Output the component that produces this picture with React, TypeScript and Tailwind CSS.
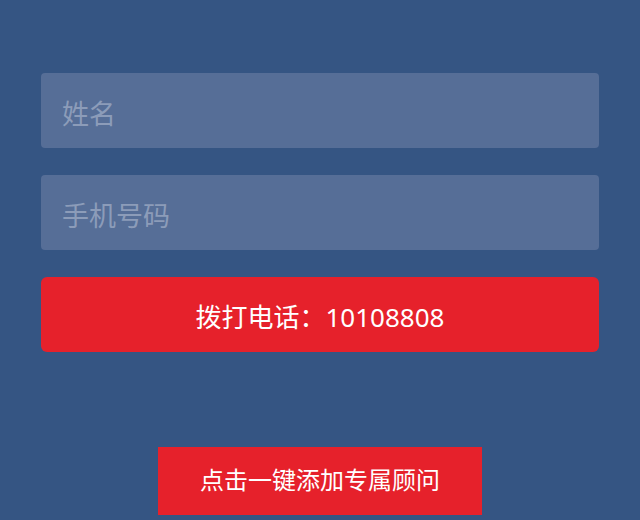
const App = () => {
  return (
    <div className="w-[640px] h-[520px] bg-[#355583] overflow-hidden font-['Noto_Sans','Noto_Sans_CJK_SC',sans-serif]">
      <div className="flex flex-col gap-[27px] px-[41px] pt-[73px]">
        <input
          placeholder="姓名"
          className="h-[75px] w-full rounded-[4px] bg-[#566e97] px-[21px] pt-[5px] text-[27px] text-white placeholder:text-[#8c9cb9] outline-none"
        />
        <input
          placeholder="手机号码"
          className="h-[75px] w-full rounded-[4px] bg-[#566e97] px-[21px] pt-[5px] text-[27px] text-white placeholder:text-[#8c9cb9] outline-none"
        />
        <button className="h-[75px] w-full rounded-[6px] bg-[#e6212b] pt-[5px] text-[26px] text-white">
          拨打电话：10108808
        </button>
      </div>
      <div className="flex justify-center pt-[95px]">
        <button className="h-[68px] w-[324px] bg-[#e6212b] pb-[3px] text-[24px] text-white">
          点击一键添加专属顾问
        </button>
      </div>
    </div>
  );
};

export default App;
